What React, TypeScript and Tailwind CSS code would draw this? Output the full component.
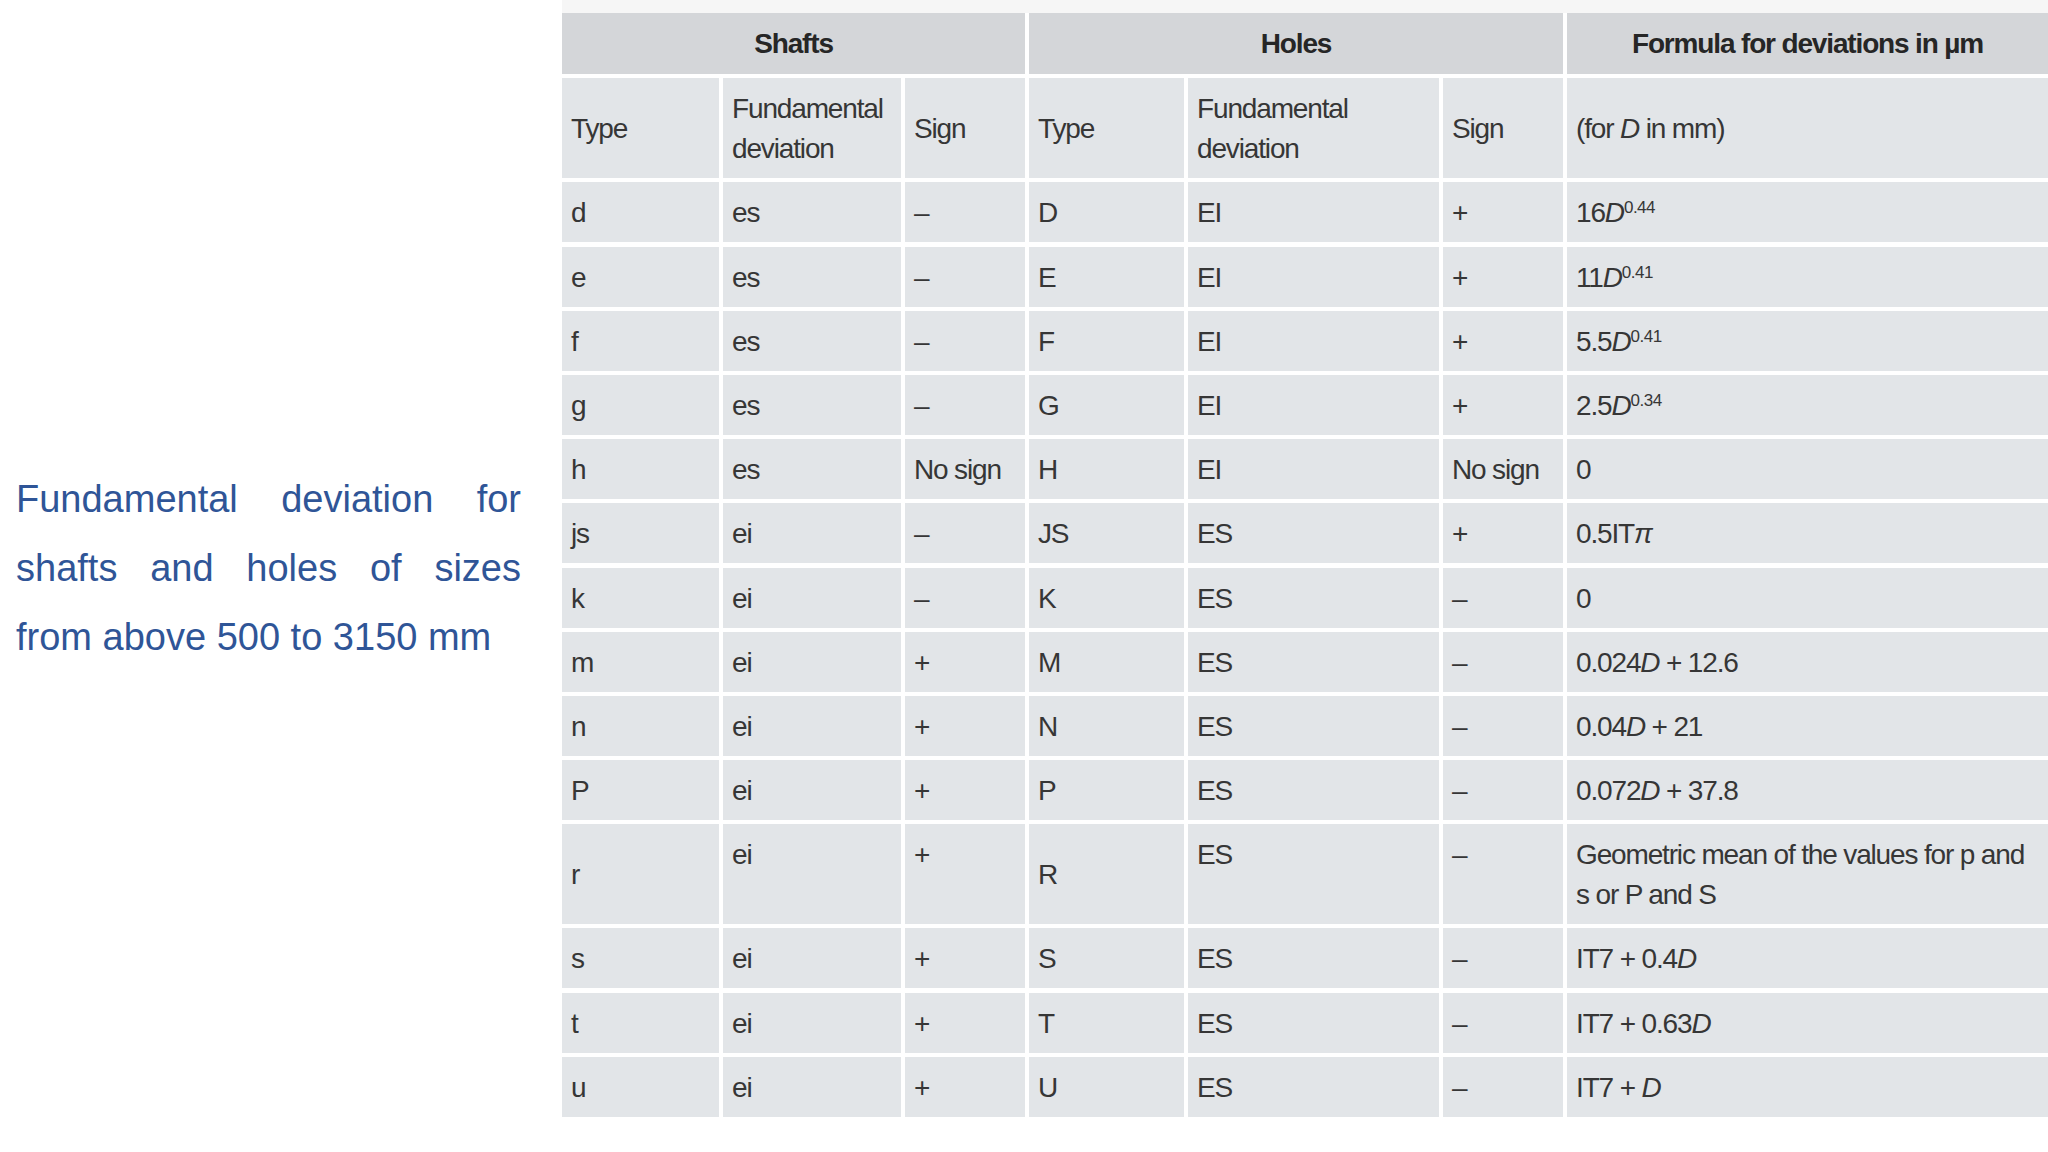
import React from "react";

type Row = {
  st: string;
  sd: string;
  ss: string;
  ht: string;
  hd: string;
  hs: string;
  f: React.ReactNode;
};

const D = () => <i>D</i>;

const Pow = ({ base, exp }: { base: string; exp: string }) => (
  <>
    {base}
    <D />
    <sup className="text-[17px] -top-[9px] tracking-[-0.5px]">{exp}</sup>
  </>
);

const rows: Row[] = [
  { st: "d", sd: "es", ss: "–", ht: "D", hd: "EI", hs: "+", f: <Pow base="16" exp="0.44" /> },
  { st: "e", sd: "es", ss: "–", ht: "E", hd: "EI", hs: "+", f: <Pow base="11" exp="0.41" /> },
  { st: "f", sd: "es", ss: "–", ht: "F", hd: "EI", hs: "+", f: <Pow base="5.5" exp="0.41" /> },
  { st: "g", sd: "es", ss: "–", ht: "G", hd: "EI", hs: "+", f: <Pow base="2.5" exp="0.34" /> },
  { st: "h", sd: "es", ss: "No sign", ht: "H", hd: "EI", hs: "No sign", f: "0" },
  { st: "js", sd: "ei", ss: "–", ht: "JS", hd: "ES", hs: "+", f: <>0.5IT<i>π</i></> },
  { st: "k", sd: "ei", ss: "–", ht: "K", hd: "ES", hs: "–", f: "0" },
  { st: "m", sd: "ei", ss: "+", ht: "M", hd: "ES", hs: "–", f: <>0.024<D /> + 12.6</> },
  { st: "n", sd: "ei", ss: "+", ht: "N", hd: "ES", hs: "–", f: <>0.04<D /> + 21</> },
  { st: "P", sd: "ei", ss: "+", ht: "P", hd: "ES", hs: "–", f: <>0.072<D /> + 37.8</> },
  {
    st: "r",
    sd: "ei",
    ss: "+",
    ht: "R",
    hd: "ES",
    hs: "–",
    f: (
      <>
        Geometric mean of the values for p and
        <br />s or P and S
      </>
    ),
  },
  { st: "s", sd: "ei", ss: "+", ht: "S", hd: "ES", hs: "–", f: <>IT7 + 0.4<D /></> },
  { st: "t", sd: "ei", ss: "+", ht: "T", hd: "ES", hs: "–", f: <>IT7 + 0.63<D /></> },
  { st: "u", sd: "ei", ss: "+", ht: "U", hd: "ES", hs: "–", f: <>IT7 + <D /></> },
];

const cell = "bg-[#e2e5e8] pl-[9px] pt-[11px] pb-[9px] leading-[40px]";
const mid = "bg-[#e2e5e8] pl-[9px] pt-[2px] flex items-center leading-[40px]";

export default function App() {
  return (
    <div className="min-h-screen bg-white flex font-['Liberation_Sans',Arial,sans-serif]">
      {/* caption */}
      <div className="w-[562px] shrink-0 pl-[16px] pb-[16px] flex items-center">
        <div className="w-[505px] text-[38px] leading-[69px] text-[#2f5597]">
          <div className="text-justify [text-align-last:justify]">Fundamental deviation for</div>
          <div className="text-justify [text-align-last:justify]">shafts and holes of sizes</div>
          <div>from above 500 to 3150 mm</div>
        </div>
      </div>

      {/* table */}
      <div className="flex-1 border-t-[13px] border-[#f6f6f6]">
        <div className="grid grid-cols-[157px_178px_120px_155px_251px_120px_1fr] gap-x-[4px] gap-y-[4.2px] bg-white text-[28px] tracking-[-1.15px] text-[#363636]">
          <div className="col-span-3 h-[61px] bg-[#d4d6d9] flex items-center justify-center font-bold text-[#262626]">
            Shafts
          </div>
          <div className="col-span-3 h-[61px] bg-[#d4d6d9] flex items-center justify-center font-bold text-[#262626]">
            Holes
          </div>
          <div className="h-[61px] bg-[#d4d6d9] flex items-center justify-center font-bold text-[#262626]">
            Formula for deviations in µm
          </div>

          <div className={mid}>Type</div>
          <div className={cell}>
            Fundamental
            <br />
            deviation
          </div>
          <div className={mid}>Sign</div>
          <div className={mid}>Type</div>
          <div className={cell}>
            Fundamental
            <br />
            deviation
          </div>
          <div className={mid}>Sign</div>
          <div className={mid}>
            <span>
              (for <i>D</i> in mm)
            </span>
          </div>

          {rows.map((r, i) => (
            <React.Fragment key={i}>
              <div className={mid}>{r.st}</div>
              <div className={cell}>{r.sd}</div>
              <div className={cell}>{r.ss}</div>
              <div className={mid}>{r.ht}</div>
              <div className={cell}>{r.hd}</div>
              <div className={cell}>{r.hs}</div>
              <div className={`${cell} whitespace-nowrap`}>{r.f}</div>
            </React.Fragment>
          ))}
        </div>
      </div>
    </div>
  );
}
